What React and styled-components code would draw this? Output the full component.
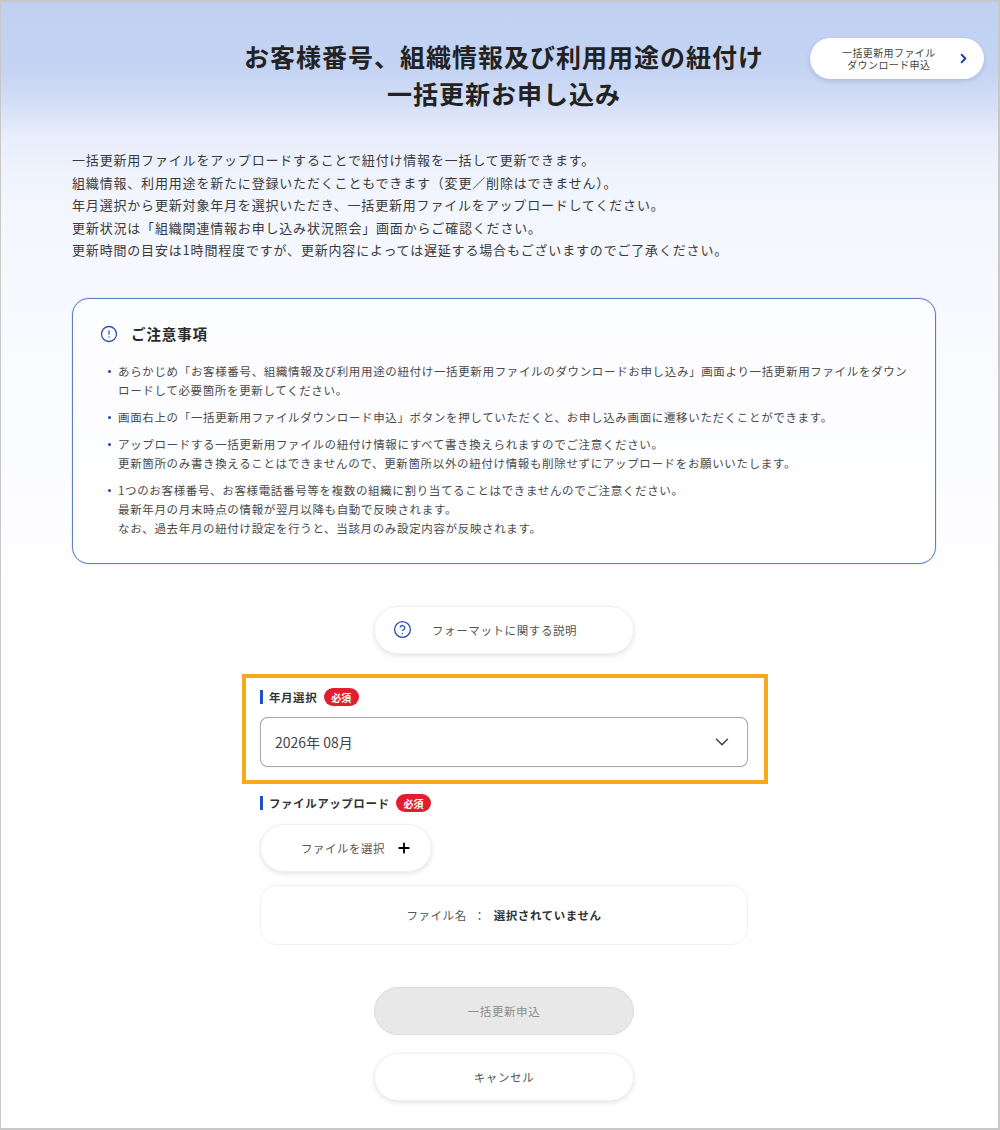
import React from 'react';
import styled, { createGlobalStyle } from 'styled-components';
import { ChevronDown, ChevronRight, CircleAlert, CircleHelp, Plus } from 'lucide-react';

const GlobalStyle = createGlobalStyle`
  html, body {
    margin: 0;
    padding: 0;
    background: #fff;
  }
  * {
    box-sizing: border-box;
  }
  body {
    font-family: "Noto Sans CJK JP", "Noto Sans", sans-serif;
    color: #333;
  }
`;

const Frame = styled.div`
  width: 1000px;
  height: 1130px;
  overflow: hidden;
  border: 2px solid #c8c8c8;
  border-left-width: 1px;
  background: linear-gradient(180deg, #bfd0f2 0, #c5d4f3 70px, #d6e0f7 105px, #e8eefb 135px, #f3f6fe 200px, #f8f9fe 300px, #fff 620px);
`;

const HeaderRow = styled.header`
  display: flex;
  align-items: flex-start;
  padding: 36px 0 0 232px;
`;

const Title = styled.h1`
  width: 542px;
  margin: 0;
  font-size: 25px;
  line-height: 37px;
  letter-spacing: 1px;
  font-weight: 700;
  text-align: center;
  color: #222;
`;

const DownloadButton = styled.button`
  display: flex;
  align-items: center;
  justify-content: space-between;
  width: 174px;
  height: 41px;
  margin: 0 0 0 35px;
  padding: 0 13px 0 32px;
  border: none;
  border-radius: 21px;
  background: #fff;
  box-shadow: 0 2px 5px rgba(60, 80, 130, 0.2);
  font: inherit;
  font-size: 10px;
  line-height: 12px;
  letter-spacing: 0.4px;
  color: #444;
  text-align: center;
  svg {
    flex: none;
    color: #1b3fa8;
  }
`;

const Content = styled.main`
  display: flex;
  flex-direction: column;
  width: 864px;
  margin-left: 71px;
`;

const Intro = styled.p`
  margin: 37px 0 0;
  font-size: 13px;
  line-height: 22.5px;
  letter-spacing: 0.82px;
  color: #3a3a3a;
`;

const NoticeBox = styled.section`
  height: 266px;
  margin-top: 36px;
  padding: 24px 20px 0 27px;
  border: 1px solid #5f7cc9;
  border-radius: 17px;
  background: rgba(255, 255, 255, 0.6);
  box-shadow: 0 0 1px #5f7cc9;
`;

const NoticeHeading = styled.h2`
  display: flex;
  align-items: center;
  gap: 13px;
  margin: 0;
  font-size: 14.5px;
  line-height: 22px;
  letter-spacing: 0.9px;
  font-weight: 700;
  color: #2a2a2a;
  svg {
    flex: none;
    color: #2f4fb5;
  }
`;

const NoticeList = styled.ul`
  display: flex;
  flex-direction: column;
  gap: 8px;
  margin: 17px 0 0;
  padding: 0;
  list-style: none;
`;

const NoticeItem = styled.li`
  position: relative;
  padding-left: 18px;
  font-size: 11.5px;
  line-height: 19px;
  letter-spacing: 0.65px;
  color: #4a4a4a;
  &::before {
    content: "";
    position: absolute;
    left: 8px;
    top: 8px;
    width: 3px;
    height: 3px;
    border-radius: 50%;
    background: #2445a8;
  }
`;

const PillButton = styled.button`
  display: flex;
  align-items: center;
  justify-content: center;
  align-self: center;
  width: 260px;
  height: 48px;
  margin: ${(p) => p.$margin || '0'};
  padding: 0;
  border: 1px solid ${(p) => (p.$disabled ? '#dcdcdc' : '#f0f0f3')};
  border-radius: 24px;
  background: ${(p) => (p.$disabled ? '#e8e8e8' : '#fff')};
  box-shadow: ${(p) => (p.$disabled ? 'none' : '0 2px 4px rgba(60, 70, 100, 0.14)')};
  font: inherit;
  font-size: 11.5px;
  letter-spacing: 0.6px;
  color: ${(p) => (p.$disabled ? '#8c8c8c' : '#555')};
`;

const HelpButton = styled(PillButton)`
  justify-content: flex-start;
  gap: 20px;
  padding-left: 18px;
  svg {
    flex: none;
    color: #2f4fb5;
  }
`;

const FormColumn = styled.div`
  display: flex;
  flex-direction: column;
  align-self: center;
  width: 488px;
`;

const HighlightBox = styled.div`
  margin: 20px -20px 0 -18px;
  padding: 10px 16px 13px 14px;
  border: 4px solid #f5a91b;
`;

const FieldLabel = styled.div`
  display: flex;
  align-items: center;
  gap: 6px;
  height: 19px;
  font-size: 11.5px;
  letter-spacing: 0.55px;
  font-weight: 700;
  color: #333;
  &::before {
    content: "";
    width: 3px;
    height: 14px;
    background: #1f4fc4;
  }
`;

const RequiredBadge = styled.span`
  display: flex;
  align-items: center;
  justify-content: center;
  width: 35px;
  height: 18px;
  margin-left: 0.5px;
  border-radius: 9px;
  background: #df1f2d;
  color: #fff;
  font-size: 10px;
  letter-spacing: 0;
  font-weight: 700;
`;

const SelectBox = styled.div`
  display: flex;
  align-items: center;
  justify-content: space-between;
  height: 50px;
  margin-top: 10px;
  padding: 0 14px;
  border: 1px solid #a9abb6;
  border-radius: 8px;
  background: #fff;
  box-shadow: 0 0 1px #a9abb6;
  font-size: 14px;
  color: #444;
  svg {
    color: #444;
  }
`;

const UploadLabel = styled(FieldLabel)`
  margin-top: 10px;
`;

const FileButton = styled.button`
  display: flex;
  align-items: center;
  justify-content: flex-end;
  gap: 11px;
  width: 172px;
  height: 48px;
  margin: 11px 0 0;
  padding: 0 19px 0 0;
  border: 1px solid #f0f0f3;
  border-radius: 24px;
  background: #fff;
  box-shadow: 0 2px 4px rgba(60, 70, 100, 0.14);
  font: inherit;
  font-size: 11.5px;
  letter-spacing: 0.5px;
  color: #555;
  svg {
    color: #000;
  }
`;

const FileNameBox = styled.div`
  display: flex;
  align-items: center;
  justify-content: center;
  gap: 7px;
  height: 60px;
  margin-top: 13px;
  border: 1px solid #eef1fd;
  border-radius: 16px;
  background: #fff;
  font-size: 11.5px;
  letter-spacing: 0.55px;
  color: #555;
  strong {
    margin-left: 1px;
    font-weight: 700;
    color: #333;
  }
`;

const App = () => (
  <Frame>
    <GlobalStyle />
    <HeaderRow>
      <Title>
        お客様番号、組織情報及び利用用途の紐付け
        <br />
        一括更新お申し込み
      </Title>
      <DownloadButton>
        <span>
          一括更新用ファイル
          <br />
          ダウンロード申込
        </span>
        <ChevronRight size={15} strokeWidth={3} />
      </DownloadButton>
    </HeaderRow>
    <Content>
      <Intro>
        一括更新用ファイルをアップロードすることで紐付け情報を一括して更新できます。
        <br />
        組織情報、利用用途を新たに登録いただくこともできます（変更／削除はできません）。
        <br />
        年月選択から更新対象年月を選択いただき、一括更新用ファイルをアップロードしてください。
        <br />
        更新状況は「組織関連情報お申し込み状況照会」画面からご確認ください。
        <br />
        更新時間の目安は1時間程度ですが、更新内容によっては遅延する場合もございますのでご了承ください。
      </Intro>
      <NoticeBox>
        <NoticeHeading>
          <CircleAlert size={18} strokeWidth={1.7} />
          ご注意事項
        </NoticeHeading>
        <NoticeList>
          <NoticeItem>
            あらかじめ「お客様番号、組織情報及び利用用途の紐付け一括更新用ファイルのダウンロードお申し込み」画面より一括更新用ファイルをダウン
            <br />
            ロードして必要箇所を更新してください。
          </NoticeItem>
          <NoticeItem>
            画面右上の「一括更新用ファイルダウンロード申込」ボタンを押していただくと、お申し込み画面に遷移いただくことができます。
          </NoticeItem>
          <NoticeItem>
            アップロードする一括更新用ファイルの紐付け情報にすべて書き換えられますのでご注意ください。
            <br />
            更新箇所のみ書き換えることはできませんので、更新箇所以外の紐付け情報も削除せずにアップロードをお願いいたします。
          </NoticeItem>
          <NoticeItem>
            1つのお客様番号、お客様電話番号等を複数の組織に割り当てることはできませんのでご注意ください。
            <br />
            最新年月の月末時点の情報が翌月以降も自動で反映されます。
            <br />
            なお、過去年月の紐付け設定を行うと、当該月のみ設定内容が反映されます。
          </NoticeItem>
        </NoticeList>
      </NoticeBox>
      <HelpButton $margin="42px 0 0">
        <CircleHelp size={19} strokeWidth={1.7} />
        フォーマットに関する説明
      </HelpButton>
      <FormColumn>
        <HighlightBox>
          <FieldLabel>
            年月選択
            <RequiredBadge>必須</RequiredBadge>
          </FieldLabel>
          <SelectBox>
            2026年 08月
            <ChevronDown size={22} strokeWidth={1.7} />
          </SelectBox>
        </HighlightBox>
        <UploadLabel>
          ファイルアップロード
          <RequiredBadge>必須</RequiredBadge>
        </UploadLabel>
        <FileButton>
          ファイルを選択
          <Plus size={16} strokeWidth={2.8} />
        </FileButton>
        <FileNameBox>
          <span>ファイル名</span>
          <span>：</span>
          <strong>選択されていません</strong>
        </FileNameBox>
      </FormColumn>
      <PillButton $disabled $margin="42px 0 0">一括更新申込</PillButton>
      <PillButton $margin="18px 0 0">キャンセル</PillButton>
    </Content>
  </Frame>
);

export default App;
